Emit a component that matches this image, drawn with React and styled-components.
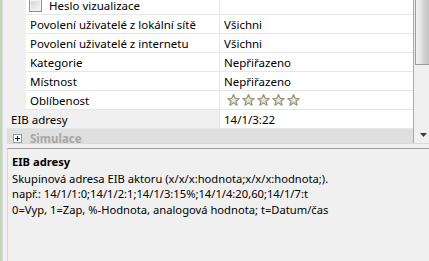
import React from "react";
import styled, { createGlobalStyle } from "styled-components";

const GlobalStyle = createGlobalStyle`
  html, body {
    margin: 0;
    padding: 0;
    background: #f0f0f0;
  }
  body {
    font-family: "Noto Sans", "Open Sans", sans-serif;
    font-size: 11.5px;
    color: #000;
  }
`;

const Window = styled.div`
  display: flex;
  width: 429px;
  height: 261px;
  overflow: hidden;
`;

const EdgeStrip = styled.div`
  flex: 0 0 2px;
  background: #c6d6ab;
  border-right: 1px solid #d3daec;
`;

const Main = styled.div`
  flex: 1;
  display: flex;
  flex-direction: column;
  padding-left: 4px;
  background: #f0f0f0;
  min-width: 0;
`;

const GridArea = styled.div`
  display: flex;
  height: 143px;
  flex: 0 0 143px;
  border-bottom: 1px solid #dadada;
`;

const Viewport = styled.div`
  flex: 0 0 407px;
  overflow: hidden;
  background: #fff;
  border-right: 1px solid #a9a9a9;
  box-sizing: border-box;
  width: 408px;
`;

const RowList = styled.div`
  margin-top: -4px;
`;

const Row = styled.div`
  display: flex;
  height: 19px;
`;

const Indent = styled.div`
  flex: 0 0 19px;
  background: #f0f0f0;
`;

const LabelCell = styled.div`
  flex: 0 0 ${(p) => p.$width}px;
  box-sizing: border-box;
  display: flex;
  align-items: center;
  gap: 7px;
  padding-left: ${(p) => p.$pad}px;
  background: ${(p) => p.$bg || "#fff"};
  border-bottom: 1px solid #e6e6e6;
  border-right: 1px solid #e6e6e6;
  white-space: nowrap;
  overflow: hidden;
`;

const ValueCell = styled.div`
  flex: 1;
  display: flex;
  align-items: center;
  padding-left: 4px;
  border-bottom: 1px solid #e6e6e6;
  white-space: nowrap;
`;

const Checkbox = styled.span`
  width: 11px;
  height: 11px;
  border: 1px solid #8e8f8f;
  background: linear-gradient(135deg, #d6d6d6, #f7f7f7);
  box-shadow: inset 0 0 0 1px #f4f4f4;
`;

const CategoryRow = styled.div`
  display: flex;
  align-items: center;
  height: 19px;
  padding-left: 6px;
  gap: 8px;
  background: #dfdfdf;
  font-weight: bold;
  color: #a6a6a6;
`;

const PlusBox = styled.span`
  width: 7px;
  height: 7px;
  border: 1px solid #8b9bb0;
  background: #fff;
  position: relative;
  &::before,
  &::after {
    content: "";
    position: absolute;
    background: #222;
  }
  &::before {
    left: 1px;
    top: 3px;
    width: 5px;
    height: 1px;
  }
  &::after {
    left: 3px;
    top: 1px;
    width: 1px;
    height: 5px;
  }
`;

const Scrollbar = styled.div`
  flex: 1;
  display: flex;
  flex-direction: column;
  background: #f0f0f0;
  padding-left: 1px;
`;

const Thumb = styled.div`
  height: 64px;
  border-left: 1px solid #9b9b9b;
  border-bottom: 1px solid #9b9b9b;
  background: linear-gradient(90deg, #f2f2f2 0%, #e6e6e6 35%, #d2d2d2 60%, #c4c4c4 100%);
`;

const Track = styled.div`
  flex: 1;
  display: flex;
  align-items: flex-end;
  justify-content: center;
  padding: 0 0 6px 3px;
`;

const Splitter = styled.div`
  height: 4px;
  flex: 0 0 4px;
`;

const Description = styled.div`
  flex: 1;
  border-top: 1px solid #a0a0a0;
  border-left: 1px solid #d8d8d8;
  padding: 5px 0 0 4px;
  font-size: 11.2px;
  line-height: 15.5px;
  white-space: nowrap;
`;

const DescTitle = styled.div`
  font-weight: bold;
  margin-bottom: 1px;
`;

const Stars = styled.div`
  display: flex;
  gap: 2px;
  padding-left: 3px;
`;

const Star = () => (
  <svg width="13" height="12" viewBox="0 0 13 12">
    <defs>
      <linearGradient id="sg" x1="0" y1="0" x2="0" y2="1">
        <stop offset="0" stopColor="#f4f2ec" />
        <stop offset="1" stopColor="#d9d4c6" />
      </linearGradient>
    </defs>
    <path
      d="M6.5 0.6 L8.2 4.3 L12.2 4.6 L9.1 7.2 L10.1 11.2 L6.5 9 L2.9 11.2 L3.9 7.2 L0.8 4.6 L4.8 4.3 Z"
      fill="url(#sg)"
      stroke="#9d9583"
      strokeWidth="1.3"
      strokeLinejoin="round"
    />
  </svg>
);

const ArrowDown = () => (
  <svg width="7" height="4" viewBox="0 0 7 4">
    <path d="M0 0 H7 L3.5 4 Z" fill="#3c3c3c" />
  </svg>
);

const childRows = [
  { label: "Povolení uživatelé z lokální sítě", value: "Všichni" },
  { label: "Povolení uživatelé z internetu", value: "Všichni" },
  { label: "Kategorie", value: "Nepřiřazeno" },
  { label: "Místnost", value: "Nepřiřazeno" },
];

export default function App() {
  return (
    <>
      <GlobalStyle />
      <Window>
        <EdgeStrip />
        <Main>
          <GridArea>
            <Viewport>
              <RowList>
                <Row>
                  <Indent />
                  <LabelCell $width={194} $pad={3}>
                    <Checkbox />
                    Heslo vizualizace
                  </LabelCell>
                  <ValueCell />
                </Row>
                {childRows.map((r) => (
                  <Row key={r.label}>
                    <Indent />
                    <LabelCell $width={194} $pad={4}>
                      {r.label}
                    </LabelCell>
                    <ValueCell>{r.value}</ValueCell>
                  </Row>
                ))}
                <Row>
                  <Indent />
                  <LabelCell $width={194} $pad={4}>
                    Oblíbenost
                  </LabelCell>
                  <ValueCell>
                    <Stars>
                      {[0, 1, 2, 3, 4].map((i) => (
                        <Star key={i} />
                      ))}
                    </Stars>
                  </ValueCell>
                </Row>
                <Row>
                  <LabelCell $width={213} $pad={4} $bg="#f0f0f0">
                    EIB adresy
                  </LabelCell>
                  <ValueCell>14/1/3:22</ValueCell>
                </Row>
                <CategoryRow>
                  <PlusBox />
                  Simulace
                </CategoryRow>
              </RowList>
            </Viewport>
            <Scrollbar>
              <Thumb />
              <Track>
                <ArrowDown />
              </Track>
            </Scrollbar>
          </GridArea>
          <Splitter />
          <Description>
            <DescTitle>EIB adresy</DescTitle>
            <div>Skupinová adresa EIB aktoru (x/x/x:hodnota;x/x/x:hodnota;).</div>
            <div>např.: 14/1/1:0;14/1/2:1;14/1/3:15%;14/1/4:20,60;14/1/7:t</div>
            <div>0=Vyp, 1=Zap, %-Hodnota, analogová hodnota; t=Datum/čas</div>
          </Description>
        </Main>
      </Window>
    </>
  );
}
